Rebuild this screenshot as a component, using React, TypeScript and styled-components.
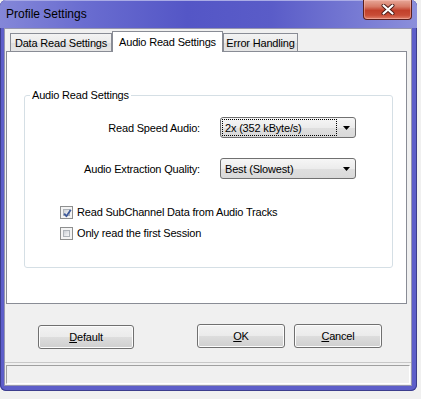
import React from 'react';
import styled, { createGlobalStyle } from 'styled-components';

const GlobalStyle = createGlobalStyle`
  html, body {
    margin: 0;
    padding: 0;
    background: #f0f0f0;
  }
  body {
    font-family: 'Liberation Sans', Arial, sans-serif;
    font-size: 11px;
    letter-spacing: -0.18px;
    color: #000;
  }
`;

const Screen = styled.div`
  width: 421px;
  height: 399px;
  overflow: hidden;
  background: #f0f0f0;
`;

const Window = styled.div`
  width: 417px;
  height: 391px;
  display: flex;
  flex-direction: column;
  border-radius: 6px;
  overflow: hidden;
  background: #5d5ec9;
  box-shadow: inset 0 0 0 1px #3c3d8c;
`;

const TitleBar = styled.div`
  height: 28px;
  flex: none;
  display: flex;
  justify-content: space-between;
  align-items: flex-start;
  padding: 0 5px 0 6px;
  background: linear-gradient(90deg, #8487d8 0%, #6a6dd0 20%, #5456c6 45%, #5a5cc8 65%, #8b8fdb 100%);
  box-shadow: inset 0 1px 0 #a9abe6;
`;

const Title = styled.span`
  font-size: 12px;
  letter-spacing: 0;
  line-height: 29px;
  color: #000;
`;

const CloseButton = styled.div`
  width: 47px;
  height: 19px;
  border: 1px solid #5a1f1c;
  border-top: none;
  border-radius: 0 0 4px 4px;
  display: flex;
  align-items: center;
  justify-content: center;
  background: linear-gradient(180deg, #e7a899 0%, #d77a66 35%, #c2402b 55%, #c84c36 80%, #e0806a 100%);
  box-shadow: inset 0 0 0 1px rgba(255, 200, 190, 0.45);
`;

const Frame = styled.div`
  flex: 1;
  display: flex;
  padding: 0 5px 5px 4px;
`;

const Client = styled.div`
  flex: 1;
  display: flex;
  flex-direction: column;
  background: #f0f0f0;
  border: 1px solid #9696ae;
`;

const TabArea = styled.div`
  padding: 2px 4px 0 1px;
`;

const TabStrip = styled.div`
  height: 20px;
  display: flex;
  align-items: flex-start;
  padding-left: 4px;
`;

const Tab = styled.div<{ $width: number; $active?: boolean }>`
  box-sizing: border-box;
  width: ${(p) => p.$width}px;
  height: ${(p) => (p.$active ? 21 : 18)}px;
  margin-top: ${(p) => (p.$active ? 0 : 2)}px;
  border: 1px solid #898c95;
  border-bottom: none;
  display: flex;
  align-items: center;
  justify-content: center;
  padding-top: ${(p) => (p.$active ? 0 : 1)}px;
  white-space: nowrap;
  position: relative;
  z-index: ${(p) => (p.$active ? 1 : 0)};
  background: ${(p) =>
    p.$active ? '#ffffff' : 'linear-gradient(180deg, #f3f3f3 0%, #ebebeb 50%, #dedede 51%, #e6e6e6 100%)'};
`;

const Panel = styled.div`
  height: 253px;
  box-sizing: border-box;
  background: #fff;
  border: 1px solid #898c95;
  padding: 37px 13px 0 17px;
`;

const GroupBox = styled.fieldset`
  margin: 0;
  min-width: 0;
  box-sizing: border-box;
  height: 179px;
  padding: 15px 0 0 0;
  border: 1px solid #d5dfe5;
  border-radius: 3px;
`;

const Legend = styled.legend`
  margin-left: 5px;
  padding: 0 2px;
  line-height: 13px;
`;

const FieldGrid = styled.div`
  display: grid;
  grid-template-columns: 175px 136px;
  column-gap: 20px;
  row-gap: 20px;
  align-items: center;
`;

const FieldLabel = styled.span`
  text-align: right;
`;

const Combo = styled.div`
  box-sizing: border-box;
  height: 21px;
  border: 1px solid #707070;
  border-radius: 3px;
  display: flex;
  align-items: center;
  padding: 0 5px 0 1px;
  background: linear-gradient(180deg, #f6f6f6 0%, #ececec 50%, #dfdfdf 51%, #d9d9d9 100%);
`;

const ComboText = styled.span<{ $focused?: boolean }>`
  flex: 1;
  height: 17px;
  line-height: 17px;
  box-sizing: border-box;
  padding-left: 2px;
  margin-right: 6px;
  border: 1px dotted ${(p) => (p.$focused ? '#000' : 'transparent')};
  white-space: nowrap;
`;

const CheckList = styled.div`
  display: flex;
  flex-direction: column;
  gap: 5px;
  margin: 25px 0 0 35px;
`;

const CheckRow = styled.label`
  height: 16px;
  display: flex;
  align-items: center;
  gap: 4px;
`;

const CheckBox = styled.span`
  width: 13px;
  height: 13px;
  box-sizing: border-box;
  border: 1px solid #8e8f8f;
  padding: 2px;
  background: #f4f4f4;
  display: flex;
`;

const CheckInner = styled.span`
  flex: 1;
  position: relative;
  background: linear-gradient(135deg, #cbcfd5 0%, #e6e8eb 60%, #f6f6f6 100%);
  border: 1px solid #aeb3b9;
  box-sizing: border-box;
`;

const ButtonRow = styled.div`
  display: flex;
  justify-content: space-between;
  align-items: flex-start;
  padding: 0 29px 0 33px;
  margin-top: 20px;
`;

const ButtonGroup = styled.div`
  display: flex;
  gap: 9px;
`;

const Button = styled.div<{ $width: number; $offset?: number }>`
  box-sizing: border-box;
  width: ${(p) => p.$width}px;
  height: 24px;
  margin-top: ${(p) => p.$offset ?? 0}px;
  border: 1px solid #707070;
  border-radius: 3px;
  display: flex;
  align-items: center;
  justify-content: center;
  background: linear-gradient(180deg, #f2f2f2 0%, #ebebeb 50%, #dddddd 51%, #cfcfcf 100%);
  box-shadow: inset 0 0 0 1px #fcfcfc;
`;

const StatusBar = styled.div`
  margin-top: auto;
  border-top: 1px solid #c8c8c8;
  padding: 2px 1px 1px 1px;
`;

const StatusPanel = styled.div`
  height: 19px;
  box-sizing: border-box;
  border: 1px solid;
  border-color: #a0a0a0 #ffffff #ffffff #a0a0a0;
`;

const CloseGlyph = () => (
  <svg width="14" height="11" viewBox="0 0 14 11">
    <path d="M2.5 1.5 L11.5 9.5 M11.5 1.5 L2.5 9.5" stroke="#4a1a16" strokeWidth="4" strokeLinecap="round" />
    <path d="M2.5 1.5 L11.5 9.5 M11.5 1.5 L2.5 9.5" stroke="#ffffff" strokeWidth="2.2" strokeLinecap="round" />
  </svg>
);

const Arrow = () => (
  <svg width="7" height="4" viewBox="0 0 7 4">
    <path d="M0 0 H7 L3.5 4 Z" fill="#000" />
  </svg>
);

const Check = () => (
  <svg width="11" height="11" viewBox="0 0 11 11" style={{ position: 'absolute', left: -2, top: -2 }}>
    <path d="M2.2 5.6 L4.4 8.2 L8.8 1.8" stroke="#3f5a9a" strokeWidth="1.8" fill="none" strokeLinejoin="round" />
  </svg>
);

export default function App() {
  return (
    <Screen>
      <GlobalStyle />
      <Window>
        <TitleBar>
          <Title>Profile Settings</Title>
          <CloseButton>
            <CloseGlyph />
          </CloseButton>
        </TitleBar>
        <Frame>
          <Client>
            <TabArea>
              <TabStrip>
                <Tab $width={102}>Data Read Settings</Tab>
                <Tab $width={111} $active>
                  Audio Read Settings
                </Tab>
                <Tab $width={75}>Error Handling</Tab>
              </TabStrip>
              <Panel>
                <GroupBox>
                  <Legend>Audio Read Settings</Legend>
                  <FieldGrid>
                    <FieldLabel>Read Speed Audio:</FieldLabel>
                    <Combo>
                      <ComboText $focused>2x (352 kByte/s)</ComboText>
                      <Arrow />
                    </Combo>
                    <FieldLabel>Audio Extraction Quality:</FieldLabel>
                    <Combo>
                      <ComboText>Best (Slowest)</ComboText>
                      <Arrow />
                    </Combo>
                  </FieldGrid>
                  <CheckList>
                    <CheckRow>
                      <CheckBox>
                        <CheckInner>
                          <Check />
                        </CheckInner>
                      </CheckBox>
                      Read SubChannel Data from Audio Tracks
                    </CheckRow>
                    <CheckRow>
                      <CheckBox>
                        <CheckInner />
                      </CheckBox>
                      Only read the first Session
                    </CheckRow>
                  </CheckList>
                </GroupBox>
              </Panel>
            </TabArea>
            <ButtonRow>
              <Button $width={96} $offset={1}>
                <span>
                  <u>D</u>efault
                </span>
              </Button>
              <ButtonGroup>
                <Button $width={88}>
                  <span>
                    <u>O</u>K
                  </span>
                </Button>
                <Button $width={88}>
                  <span>
                    <u>C</u>ancel
                  </span>
                </Button>
              </ButtonGroup>
            </ButtonRow>
            <StatusBar>
              <StatusPanel />
            </StatusBar>
          </Client>
        </Frame>
      </Window>
    </Screen>
  );
}
